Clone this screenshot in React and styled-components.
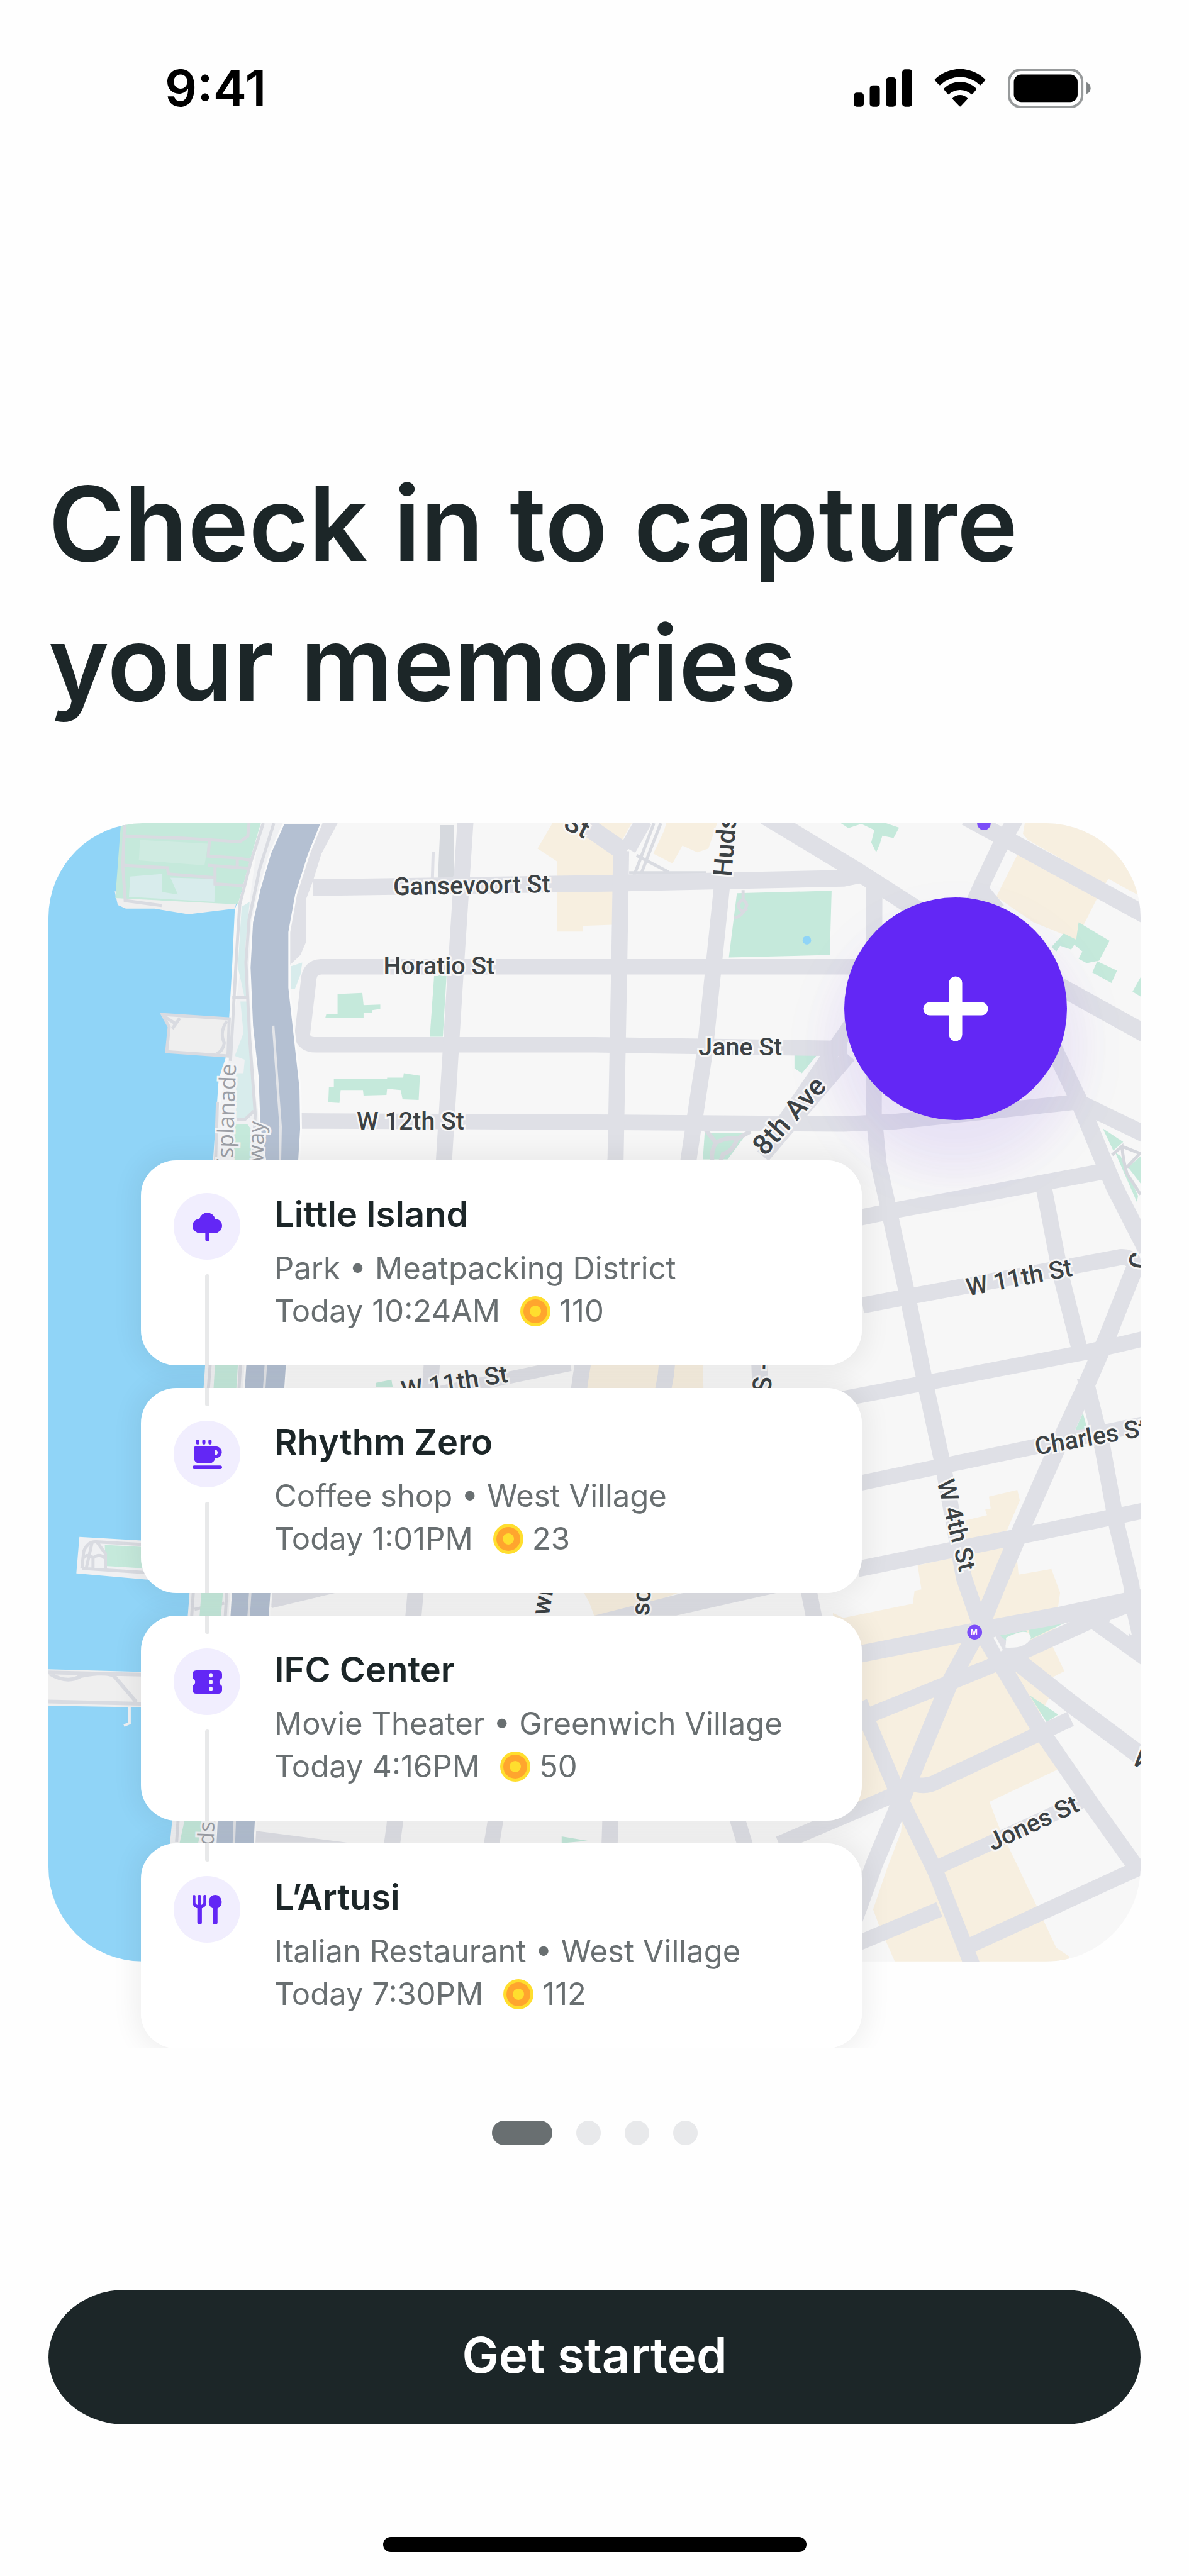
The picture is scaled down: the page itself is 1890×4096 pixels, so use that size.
import React from 'react';
import styled, { createGlobalStyle } from 'styled-components';

const ink = '#1c2628';
const violet = '#6327f5';
const road = '#dfe0e6';
const paper = '#f7f7f7';
const mint = '#c5e9db';
const teal = '#d8ecec';
const sand = '#f7efe0';
const path = '#d9dbe1';

const GlobalStyle = createGlobalStyle`
  * { box-sizing: border-box; }
  body {
    margin: 0;
    background: #fefefe;
    color: ${ink};
    font-family: Inter, "Liberation Sans", sans-serif;
  }
`;

const Screen = styled.div`
  display: flex;
  flex-direction: column;
  min-height: 100vh;
`;

const StatusBar = styled.header`
  display: flex;
  align-items: center;
  justify-content: space-between;
  height: 280px;
  padding: 0 156px 0 262px;
`;

const Clock = styled.time`
  color: #000;
  font-size: 80px;
  font-weight: 600;
  line-height: 96px;
`;

const StatusIcons = styled.div`
  display: flex;
  align-items: center;
  gap: 35px;
`;

const Content = styled.main`
  display: flex;
  flex-direction: column;
  flex: 1;
  padding: 442px 77px 0;
`;

const Title = styled.h1`
  margin: 0;
  font-size: 164px;
  font-weight: 600;
  line-height: 222px;
`;

const Hero = styled.section`
  display: grid;
  margin-top: 143px;
  > * { grid-area: 1 / 1; }
`;

const MapFrame = styled.svg`
  display: block;
  width: 100%;
  height: auto;
  align-self: start;
  border-radius: 150px;
  overflow: hidden;
`;

const AddButton = styled.button`
  display: grid;
  place-items: center;
  justify-self: end;
  width: 354px;
  height: 354px;
  margin: 118px 117px 0 0;
  padding: 0;
  border: 0;
  border-radius: 50%;
  background: ${violet};
  box-shadow:
    0 60px 60px 20px rgba(99, 39, 245, 0.05),
    0 60px 120px 10px rgba(99, 39, 245, 0.05);
`;

const Timeline = styled.ol`
  display: flex;
  flex-direction: column;
  gap: 36px;
  width: 66%;
  margin: 536px 0 0 147px;
  padding: 0;
  list-style: none;
  isolation: isolate;
  clip-path: inset(-100px -100px 0 -100px);
`;

const Card = styled.li`
  position: relative;
  display: flex;
  gap: 54px;
  padding: 0 52px;
  border-radius: 56px;
  background: #fff;

  &::before {
    content: "";
    position: absolute;
    inset: 0;
    z-index: -1;
    border-radius: inherit;
    box-shadow: 0 0 40px 10px rgba(0, 0, 0, 0.06);
  }
`;

const Rail = styled.div`
  display: flex;
  flex-direction: column;
  align-items: center;
  gap: 23px;
`;

const Stub = styled.span`
  width: 7px;
  height: 29px;
  border-radius: 0 0 4px 4px;
  background: ${p => (p.$visible ? '#e8e9ea' : 'transparent')};
`;

const Tail = styled.span`
  flex: 1;
  width: 7px;
  border-radius: 4px 4px 0 0;
  background: ${p => (p.$visible ? '#e8e9ea' : 'transparent')};
`;

const Badge = styled.span`
  display: grid;
  place-items: center;
  width: 106px;
  height: 106px;
  border-radius: 50%;
  background: #f1eefe;
`;

const Details = styled.div`
  padding: 52px 0;
`;

const PlaceName = styled.h2`
  margin: 0 0 18px;
  font-size: 56px;
  font-weight: 600;
  line-height: 68px;
`;

const Meta = styled.p`
  display: flex;
  align-items: center;
  margin: 0;
  color: #696f71;
  font-size: 49px;
  line-height: 68px;
  white-space: nowrap;
`;

const Coins = styled.span`
  display: inline-flex;
  align-items: center;
  gap: 14px;
  margin-left: 32px;
`;

const Pager = styled.nav`
  display: flex;
  justify-content: center;
  gap: 38px;
  margin-top: 115px;
`;

const Dot = styled.button`
  width: ${p => (p.$active ? 96 : 39)}px;
  height: 39px;
  padding: 0;
  border: 0;
  border-radius: 20px;
  background: ${p => (p.$active ? '#696f71' : '#e8e9eb')};
`;

const StartButton = styled.button`
  height: 214px;
  margin-top: 230px;
  padding: 0 0 6px;
  border: 0;
  border-radius: 122px / 108px;
  background: ${ink};
  color: #fff;
  font-family: inherit;
  font-size: 78px;
  font-weight: 600;
  line-height: 96px;
`;

const HomeIndicator = styled.div`
  align-self: center;
  width: 673px;
  height: 24px;
  margin: 179px 0 38px;
  border-radius: 12px;
  background: #000;
`;

const roads = [
  ['M505 1434 L980 1427 L1362 1419 L1395 1412', 27],
  ['M1400 1562 H519 Q499 1562 498 1586 L488 1672 Q490 1688 510 1688 H960 L1368 1694', 25],
  ['M485 1811 L960 1813 L1362 1816 L1448 1812 L1752 1779', 25],
  ['M752 1320 L734 1596 L717 1873 L697 2207 L671 2572 L637 2950 L630 3000', 26],
  ['M1003 1375 L1000 1555 L994 1873 L938 2223 L920 2350', 26],
  ['M1040 1325 L1014 1371', 27],
  ['M935 1326 L1010 1378', 30],
  ['M1166 1430 L1138 1700 L1112 1873 L1075 2223 L1050 2360', 26],
  ['M1412 1430 L1411 1800 L1419 1881 L1436 1957 L1465 2091 L1494 2234 L1523 2368 L1557 2550 L1583 2625', 26],
  ['M1236 1318 L1385 1408 L1477 1467 L1723 1600 L1860 1676', 29],
  ['M1560 1320 L1637 1362 L1860 1484', 28],
  ['M1642 1320 L1617 1363 L1582 1437 L1572 1460', 26],
  ['M1585 1437 L1612 1470', 24],
  ['M1700 1690 L1741 1775 L1781 1873 L1800 1918 L1852 2020', 28],
  ['M1746 1783 L1860 1838', 27],
  ['M1385 1968 L1448 1955 L1790 1891', 26],
  ['M1686 1920 L1712 2055 L1746 2190', 26],
  ['M1752 2225 L1781 2341 L1804 2466 L1827 2560 L1838 2660', 26],
  ['M1393 2109 L1477 2093 L1810 2031 Q1826 2030 1836 2044', 26],
  ['M1836 2040 L1787 2163 L1752 2243 L1706 2342 L1643 2485 L1611 2560 L1584 2626 L1534 2718 L1460 2897 L1413 3009 L1380 3100', 28],
  ['M1350 2262 L1752 2185 L1860 2160', 25],
  ['M1385 2397 L1534 2366 L1860 2298', 25],
  ['M1385 2535 L1637 2484 L1860 2438', 26],
  ['M1385 2673 L1583 2634 L1706 2611 L1860 2578', 28],
  ['M1385 2779 L1609 2688 L1764 2618 L1845 2585', 25],
  ['M1388 2750 L1454 2907 L1511 3024 L1572 3180', 26],
  ['M1583 2632 L1678 2792 L1764 2917 L1840 3024', 27],
  ['M1600 2650 L1729 2752 L1860 2850', 30],
  ['M1764 2617 L1860 2686', 26],
  ['M1468 2880 Q1494 2890 1514 2878 L1729 2777', 25],
  ['M1511 3018 L1614 2971 L1757 2905', 24],
  ['M1385 3140 L1517 3085', 25],
  ['M1563 3145 L1850 3013', 25],
  ['M1258 2979 L1385 2925 L1460 2893', 25],
  ['M986 2930 L984 2990', 26],
  ['M1188 2930 L1206 2990', 25],
  ['M802 2930 L792 2990', 25],
  ['M1304 2560 L1316 2620', 26],
  ['M1226 2195 L1228 2250', 26],
  ['M650 2262 L921 2205', 20],
  ['M1240 1850 L1412 1600 M1232 1868 L1371 1705', 24],
];

const sands = [
  '892,1330 1020,1330 1006,1355 990,1380 989,1494 941,1496 941,1505 900,1505 900,1392 868,1371',
  '1072,1343 1076,1330 1158,1330 1144,1371 1126,1377 1102,1366 1086,1395 1055,1379',
  '1655,1330 1842,1330 1842,1448 1790,1420 1785,1428 1660,1357 1652,1347',
  '1643,1381 1772,1451 1738,1518 1669,1490 1609,1449',
  '1643,2407 1647,2424 1626,2473 1560,2488 1557,2457 1594,2448 1591,2439 1600,2437 1597,2418',
  '1482,2529 1640,2495 1645,2544 1698,2535 1712,2573 1700,2660 1719,2700 1698,2711 1703,2726 1680,2770 1680,2813 1710,2858 1598,2911 1614,2953 1675,3081 1706,3147 1727,3161 1727,3169 1445,3169 1420,3112 1410,3085 1432,3020 1455,2960 1460,2912 1380,2925 1345,2606 1362,2614 1474,2591 1477,2570 1488,2568',
  '950,2200 1135,2200 1136,2245 930,2245',
  '940,2568 1110,2568 1050,2590 960,2612 952,2590',
];

const greens = [
  '545,1606 585,1604 587,1624 614,1623 614,1630 601,1632 601,1636 587,1637 587,1645 525,1645 527,1638 545,1638',
  '701,1576 721,1576 715,1675 694,1675',
  '539,1743 625,1743 625,1741 651,1741 652,1734 678,1738 676,1777 650,1776 647,1761 625,1759 624,1769 587,1770 586,1761 550,1761 548,1782 530,1781 531,1756 539,1756',
  '1190,1443 1343,1439 1340,1543 1177,1547',
  '1358,1330 1431,1330 1452,1337 1443,1354 1425,1350 1421,1363 1415,1377 1407,1361 1412,1341 1391,1331 1370,1338',
  '1742,1490 1792,1520 1775,1552 1755,1556 1742,1549 1748,1537 1735,1526 1730,1534 1712,1528 1706,1537 1698,1530 1718,1508 1738,1518',
  '1772,1553 1804,1568 1795,1588 1764,1571',
  '1842,1579 1829,1602 1842,1610',
  '1283,1705 1319,1705 1295,1734 1283,1726',
  '1138,1830 1207,1830 1175,1873 1135,1873',
  '1781,1823 1814,1845 1798,1859',
  '1801,1862 1810,1868 1838,1932 1836,1942',
  '1822,1886 1842,1868 1842,1912',
  '1749,2283 1756,2309 1736,2311',
  '1724,2620 1663,2649 1662,2632',
  '1610,2643 1657,2634 1663,2647 1620,2666',
  '1663,2739 1709,2770 1690,2782',
  '907,2967 949,2974 907,2978',
  '607,2234 632,2229 634,2241 607,2241',
  '379,1816 399,1816 405,1824 405,1873 384,2205 360,2572 328,2940 315,3000 285,3000 298,2940 325,2572 347,2205 377,1873',
];

const streetLabels = [
  ['Gansevoort St', 635, 1446, -1, 40],
  ['Horatio St', 619, 1574, 0, 40],
  ['W 12th St', 576, 1825, 0, 40],
  ['Jane St', 1128, 1705, 0, 40],
  ['8th Ave', 1235, 1869, -48, 45],
  ['Hudson St', 1181, 1417, -85, 42],
  ['St', 908, 1338, 26, 42],
  ['W 11th St', 1563, 2094, -11, 40],
  ['W 11th St', 650, 2260, -9, 40],
  ['Charles St', 1674, 2351, -10, 40],
  ['W 4th St', 1513, 2394, 76, 40],
  ['Jones St', 1603, 2991, -25, 40],
  ['C', 1850, 2052, -80, 40],
  ['W', 1826, 2848, 34, 40],
  ['S -', 1245, 2250, -88, 42],
  ['wi', 886, 2611, -80, 42],
  ['so', 1048, 2611, -86, 42],
];

function VillageMap() {
  return (
    <MapFrame viewBox="78 1330 1764 1839" role="img" aria-label="Map of the West Village">
      <rect x="78" y="1330" width="1764" height="1839" fill={paper} />
      <polygon fill="#f0f1f3" points="420,1330 460,1330 400,1700 430,1873 396,2207 373,2572 350,2940 338,3169 240,3169 300,2600 330,2207 340,1873 370,1700" />
      <polygon fill="#90d4f7" points="78,1330 195,1330 390,1440 379,1469 375,1555 370,1643 364,1710 353,1743 344,1873 331,2207 306,2572 278,2940 255,3169 78,3169" />
      <polygon fill="#efefef" points="185,1440 384,1450 379,1468 304,1477 249,1468 203,1468 190,1462" />
      <polygon fill={mint} points="195,1330 421,1330 404,1388 384,1461 186,1451" />
      <polygon fill="#cfebe1" points="226,1357 336,1363 330,1398 224,1390" />
      <polygon fill={teal} points="210,1416 261,1412 261,1441 287,1445 275,1418 347,1420 346,1457 208,1449" />
      <polygon fill={teal} points="403,1457 390,1465 384,1563 395,1612 398,1608 395,1539" />
      <polygon fill={teal} points="388,1618 399,1618 410,1792 400,1806 381,1806 381,1734 393,1734 395,1712 379,1706 393,1669" />
      <polygon fill="#efefef" stroke={path} strokeWidth="5" points="262,1639 370,1646 368,1706 269,1699 273,1659" />
      <path d="M278 1662 L290 1645 M262 1640 L282 1653 M366 1650 Q354 1668 362 1685 Q360 1698 350 1702" fill="none" stroke={path} strokeWidth="5" />
      <g fill="none" stroke={path} strokeWidth="5">
        <path d="M201 1330 L198 1398 L202 1455 L261 1463 M201 1351 L295 1354 L387 1360 L400 1351 L402 1330" />
        <path d="M338 1358 L336 1383 L381 1386 L407 1390 M383 1386 V1400 M336 1398 L404 1403 M347 1400 V1428 L395 1431" />
        <path d="M198 1398 L270 1402 L272 1412 L347 1418" />
        <path d="M425 1330 L405 1392 L387 1461 L382 1539 L372 1714 M442 1330 L419 1404 L402 1486 L397 1555 L403 1677 L412 1800 L408 1873 L388 2207 L366 2572 L342 2976" />
        <path d="M375 1612 H398 M382 1809 H395 L410 1795" />
        <path d="M351 1780 L348 1873 L339 2207 L312 2572 L285 2976" />
        <path d="M314 2600 L362 2590" />
      </g>
      <polygon fill="#f0f1f3" points="128,2483 228,2489 300,2500 300,2556 235,2552 123,2542" />
      <polygon fill={mint} points="169,2496 300,2503 300,2538 170,2530" />
      <path d="M132 2534 L135 2506 Q142 2490 155 2491 L240 2496 M132 2534 L240 2541 M149 2490 L139 2534 M156 2491 L170 2510 V2534 M150 2515 V2534 M134 2517 Q142 2509 150 2517 Q160 2509 169 2517" fill="none" stroke={path} strokeWidth="5" />
      <polygon fill="#efefef" points="78,2697 330,2704 330,2760 78,2756" />
      <path d="M78 2702 L330 2708 M78 2749 L330 2755 M80 2704 Q108 2721 130 2708 Q170 2700 184 2708 L220 2750" fill="none" stroke={path} strokeWidth="6" />
      <path d="M209 2758 V2784 L200 2788" fill="none" stroke="#f0f1f3" strokeWidth="4" />

      {sands.map(points => <polygon key={points} fill={sand} points={points} />)}
      {greens.map(points => <polygon key={points} fill={mint} points={points} />)}
      <ellipse cx="1303" cy="1519" rx="7" ry="7" fill="#90d4f7" />
      <path d="M1186 1483 Q1200 1480 1206 1462 Q1200 1446 1192 1462 Q1196 1478 1206 1468 M1200 1438 V1452" fill="none" stroke={path} strokeWidth="5" />
      <path d="M1140 1826 L1156 1846 Q1148 1860 1150 1875 M1156 1846 Q1176 1836 1190 1840 L1212 1828 M1190 1840 Q1184 1860 1168 1864 L1164 1875" fill="none" stroke={path} strokeWidth="7" />
      <path d="M1018 1430 L1056 1330 M1036 1410 L1067 1330 M1016 1410 H1140 M1028 1382 L1080 1409" fill="none" stroke={path} strokeWidth="5" />
      <path d="M1796 1866 L1812 1852 Q1814 1876 1820 1896 L1842 1930 M1812 1852 L1842 1864 M1820 1886 L1842 1862" fill="none" stroke="#d5d7dd" strokeWidth="5" />

      <g fill={road}>
        <polygon points="711,1333 733,1333 733,1410 729,1440 706,1440" fill="#d6d9de" />
        <polygon points="697,1376 702,1376 700,1440 695,1440" />
        <polygon points="500,1330 545,1330 519,1379 505,1424 494,1453 494,1522 485,1543 466,1561 455,1500" />
        <polygon points="438,2596 436,2572 548,2572 440,2598" />
        <polygon points="413,2958 560,2977 411,2977" />
        <polygon points="1110,2572 1261,2572 1092,2610 960,2610" />
      </g>
      <polygon fill={teal} points="470,1561 488,1555 485,1575 476,1598 470,1598" />
      {roads.map(([d, w]) => (
        <path key={d} d={d} fill="none" stroke={road} strokeWidth={w} strokeLinejoin="round" />
      ))}
      <polygon fill={sand} points="1583,2662 1594,2681 1568,2691" />
      <path d="M1625 2648 Q1660 2630 1663 2646 Q1655 2662 1624 2660 M1606 2645 L1618 2667" fill={paper} stroke={paper} strokeWidth="4" />
      <polygon fill={paper} points="1792,2618 1820,2607 1828,2642" />

      <path
        d="M458 1330 L436 1379 L419 1437 L407 1490 L403 1563 L407 1657 L416 1739 L419 1820 L428 1873 L396 2207 L373 2572 L350 2940 L338 3169 H400 L413 2940 L438 2572 L463 2205 L483 1873 L486 1824 L485 1759 L476 1677 L467 1596 V1506 L478 1445 L499 1379 L519 1330 Z"
        fill="#b4c0d2"
        stroke="#fafafa"
        strokeWidth="3"
      />
      <path d="M441 1657 L447 1739 L453 1820 L452 1873 L429 2207 L404 2572 L379 2940 L370 3169" fill="none" stroke="#e2e4e8" strokeWidth="4" />

      <g fill="#9c9fa6" stroke="#f3f4f6" strokeWidth="6" paintOrder="stroke" fontFamily="'Open Sans', 'Noto Sans', sans-serif" fontSize="36" textAnchor="end">
        <text transform="translate(381 1719) rotate(-88)">Esplanade</text>
        <text transform="translate(427 1812) rotate(-88)">Greenway</text>
        <text transform="translate(346 2943) rotate(-88)">ds</text>
      </g>
      <g fill="#3c4245" stroke="#f7f7f7" strokeWidth="6" paintOrder="stroke" fontFamily="Roboto, 'Liberation Sans', sans-serif" fontWeight="500">
        {streetLabels.map(([name, x, y, angle, size]) => (
          <text key={`${name}${x}`} fontSize={size} transform={`translate(${x} ${y}) rotate(${angle})`}>{name}</text>
        ))}
      </g>
      <g fontFamily="Inter, sans-serif" fontWeight="700" fontSize="12" fill="#fff" textAnchor="middle">
        <circle cx="1589" cy="1330" r="11" fill="#7b4df8" />
        <circle cx="1574" cy="2637" r="12" fill="#7b4df8" />
        <text x="1573" y="2642">M</text>
      </g>
    </MapFrame>
  );
}

function TreeIcon() {
  return (
    <svg width="47" height="47" viewBox="0 0 24 24" fill={violet} aria-hidden="true">
      <path d="M5.6 5.6A6.6 6.6 0 0 1 18.4 5.6A5.7 5.7 0 0 1 18.2 17H13.6V22.4a1.6 1.6 0 0 1-3.2 0V17H5.8A5.7 5.7 0 0 1 5.6 5.6z" />
    </svg>
  );
}

function CupIcon() {
  return (
    <svg width="47" height="47" viewBox="0 0 24 24" fill={violet} aria-hidden="true">
      <rect x="2.9" y="0" width="2.6" height="4" rx="1.3" />
      <rect x="7.9" y="0" width="2.6" height="4" rx="1.3" />
      <rect x="12.9" y="0" width="2.6" height="4" rx="1.3" />
      <path fillRule="evenodd" d="M2.6 5.5H19a4.7 4.7 0 0 1 0 9.6h-.8a4.4 4.4 0 0 1-4.2 4.2H5.4a4.2 4.2 0 0 1-4.2-4.2V6.9a1.4 1.4 0 0 1 1.4-1.4zM18.2 8.2v4.6a2.3 2.3 0 0 0 0-4.6z" />
      <rect x="0" y="21" width="24" height="3" rx="1.5" />
    </svg>
  );
}

function TicketIcon() {
  return (
    <svg width="47" height="47" viewBox="0 0 24 24" fill={violet} aria-hidden="true">
      <path d="M3 2.5H21a3 3 0 0 1 3 3V8.2c0 .6-.3 1-.8 1.3a3 3 0 0 0 0 5c.5.3.8.7.8 1.3V18.5a3 3 0 0 1-3 3H3a3 3 0 0 1-3-3V15.8c0-.6.3-1 .8-1.3a3 3 0 0 0 0-5C.3 9.2 0 8.8 0 8.2V5.5a3 3 0 0 1 3-3z" />
      <g fill="#f1eefe">
        <rect x="13.7" y="4.7" width="2.6" height="3.6" rx="1.3" />
        <rect x="13.7" y="10.2" width="2.6" height="3.6" rx="1.3" />
        <rect x="13.7" y="15.7" width="2.6" height="3.6" rx="1.3" />
      </g>
    </svg>
  );
}

function ForkSpoonIcon() {
  return (
    <svg width="47" height="47" viewBox="0 0 24 24" fill={violet} aria-hidden="true">
      <path d="M1.3 0a1.1 1.1 0 0 1 1.1 1.1V6.2c0 .9.7 1.6 2 2V1.1a1.1 1.1 0 0 1 2.4 0V8.2c1.3-.4 2-1.1 2-2V1.1a1.1 1.1 0 0 1 2.3 0V6.4c0 2.3-1.3 3.9-3.5 4.5V22.2a1.8 1.8 0 0 1-3.7 0V10.9C1.6 10.3.2 8.7.2 6.4V1.1A1.1 1.1 0 0 1 1.3 0z" />
      <path d="M18.4 0c3 0 5.3 2.5 5.3 5.7 0 2.4-1.4 4.4-3.4 5.3V22.2a1.8 1.8 0 0 1-3.7 0V11c-2-.9-3.4-2.900-3.400-5.300C13.200 2.500 15.500 0 18.400 0z" />
    </svg>
  );
}

function CoinIcon() {
  return (
    <svg width="48" height="48" viewBox="0 0 48 48" aria-label="coins" role="img">
      <circle cx="24" cy="24" r="24" fill="#ffde2e" />
      <circle cx="24" cy="24" r="19" fill="#ffa52e" />
      <circle cx="24" cy="24" r="9" fill="#ffde2e" />
    </svg>
  );
}

const visits = [
  { name: 'Little Island', about: 'Park • Meatpacking District', time: 'Today 10:24AM', coins: 110, Icon: TreeIcon },
  { name: 'Rhythm Zero', about: 'Coffee shop • West Village', time: 'Today 1:01PM', coins: 23, Icon: CupIcon },
  { name: 'IFC Center', about: 'Movie Theater • Greenwich Village', time: 'Today 4:16PM', coins: 50, Icon: TicketIcon },
  { name: 'L’Artusi', about: 'Italian Restaurant • West Village', time: 'Today 7:30PM', coins: 112, Icon: ForkSpoonIcon },
];

export default function App() {
  return (
    <Screen>
      <GlobalStyle />
      <StatusBar>
        <Clock>9:41</Clock>
        <StatusIcons>
          <svg width="93" height="60" viewBox="0 0 284 182" aria-hidden="true">
            <rect x="0" y="113" width="49" height="69" rx="15" />
            <rect x="78" y="78" width="49" height="104" rx="15" />
            <rect x="157" y="39" width="49" height="143" rx="15" />
            <rect x="235" y="0" width="49" height="182" rx="15" />
          </svg>
          <svg width="82" height="60" viewBox="445 66 247 183" aria-hidden="true">
            <path d="M447 115A173 173 0 0 1 690 115Q693 118 690 121L670 142Q667 145 664 142A139 139 0 0 0 474 142Q470 145 467 142L447 121Q444 118 447 115z" />
            <path d="M491 159A111 111 0 0 1 647 159Q650 162 647 165L629 187Q626 190 623 187A82 82 0 0 0 515 187Q512 190 509 187L491 165Q488 162 491 159z" />
            <path d="M533 206A50 50 0 0 1 604 206Q608 209 604 212L572 246Q569 249 566 246L533 212Q529 209 533 206z" />
          </svg>
          <svg width="132" height="63" viewBox="801 61 402 192" aria-hidden="true">
            <rect x="807" y="67" width="354" height="180" rx="56" fill="none" stroke="#979a9b" strokeWidth="12" />
            <rect x="830" y="90" width="309" height="133" rx="36" />
            <path d="M1182 127Q1202 136 1202 156T1182 184z" fill="#7f8384" />
          </svg>
        </StatusIcons>
      </StatusBar>

      <Content>
        <Title>
          Check in to capture
          <br />
          your memories
        </Title>

        <Hero>
          <VillageMap />
          <AddButton type="button" aria-label="Check in">
            <svg width="104" height="104" viewBox="0 0 104 104" stroke="#fff" strokeWidth="21" strokeLinecap="round" aria-hidden="true">
              <path d="M52 11V93M11 52H93" />
            </svg>
          </AddButton>
          <Timeline>
            {visits.map(({ name, about, time, coins, Icon }, i) => (
              <Card key={name}>
                <Rail>
                  <Stub $visible={i > 0} />
                  <Badge><Icon /></Badge>
                  <Tail $visible={i < visits.length - 1} />
                </Rail>
                <Details>
                  <PlaceName>{name}</PlaceName>
                  <Meta>{about}</Meta>
                  <Meta>
                    {time}
                    <Coins><CoinIcon />{coins}</Coins>
                  </Meta>
                </Details>
              </Card>
            ))}
          </Timeline>
        </Hero>

        <Pager aria-label="Intro pages">
          {[1, 2, 3, 4].map(n => (
            <Dot key={n} type="button" $active={n === 1} aria-label={`Page ${n}`} />
          ))}
        </Pager>

        <StartButton type="button">Get started</StartButton>
        <HomeIndicator />
      </Content>
    </Screen>
  );
}
